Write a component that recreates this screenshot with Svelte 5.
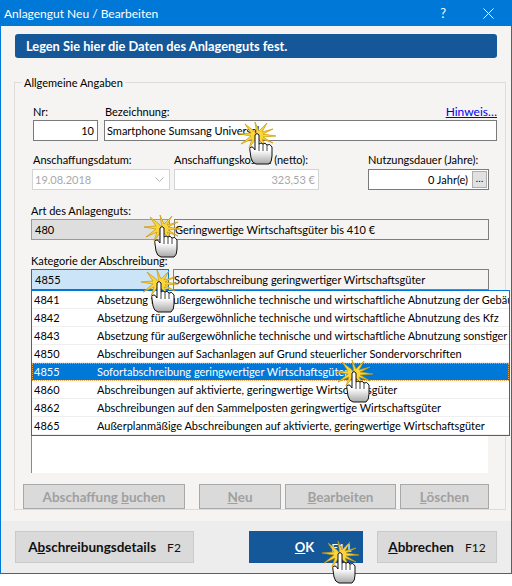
<script lang="ts">
  // Rows of the Kategorie dropdown
  const rows = [
    ["4841", "Absetzung für außergewöhnliche technische und wirtschaftliche Abnutzung der Gebäude"],
    ["4842", "Absetzung für außergewöhnliche technische und wirtschaftliche Abnutzung des Kfz"],
    ["4843", "Absetzung für außergewöhnliche technische und wirtschaftliche Abnutzung sonstiger Wirtschaftsgüter"],
    ["4850", "Abschreibungen auf Sachanlagen auf Grund steuerlicher Sondervorschriften"],
    ["4855", "Sofortabschreibung geringwertiger Wirtschaftsgüter"],
    ["4860", "Abschreibungen auf aktivierte, geringwertige Wirtschaftsgüter"],
    ["4862", "Abschreibungen auf den Sammelposten geringwertige Wirtschaftsgüter"],
    ["4865", "Außerplanmäßige Abschreibungen auf aktivierte, geringwertige Wirtschaftsgüter"],
  ];

  // Click markers laid over the dialog (tutorial annotations)
  const clicks = [
    [239, 122], [144, 215], [141, 270], [336, 360], [322, 541],
  ];
</script>

<div class="window">
  <header class="titlebar">
    <span class="title">Anlagengut Neu / Bearbeiten</span>
    <span class="help">?</span>
    <svg class="close" width="11" height="11" viewBox="0 0 11 11"><path d="M0.5 0.5 L10.5 10.5 M10.5 0.5 L0.5 10.5" stroke="#fff" stroke-width="1" fill="none" /></svg>
  </header>

  <div class="body">
    <div class="banner">Legen Sie hier die Daten des Anlagenguts fest.</div>

    <fieldset class="group">
      <legend>Allgemeine Angaben</legend>

      <div class="row row-top">
        <div class="col col-nr">
          <span class="lbl">Nr:</span>
          <div class="input right">10</div>
        </div>
        <div class="col col-name">
          <div class="lbl-line">
            <span class="lbl">Bezeichnung:</span>
            <span class="link">Hinweis…</span>
          </div>
          <div class="input">Smartphone Sumsang Universal</div>
        </div>
      </div>

      <div class="row row-second">
        <div class="col col-date">
          <span class="lbl">Anschaffungsdatum:</span>
          <div class="input disabled date">
            <span>19.08.2018</span>
            <svg width="9" height="6" viewBox="0 0 9 6"><path d="M0.5 0.5 L4.5 4.5 L8.5 0.5" stroke="#b5b5b5" fill="none" /></svg>
          </div>
        </div>
        <div class="col col-cost">
          <span class="lbl">Anschaffungskosten (netto):</span>
          <div class="input disabled right">323,53 €</div>
        </div>
        <div class="col col-dur">
          <span class="lbl">Nutzungsdauer (Jahre):</span>
          <div class="input dur">
            <span class="dur-val">0 Jahr(e)</span>
            <span class="dots">…</span>
          </div>
        </div>
      </div>

      <div class="block art">
        <span class="lbl">Art des Anlagenguts:</span>
        <div class="pair">
          <div class="field code grey">480</div>
          <div class="field text">Geringwertige Wirtschaftsgüter bis 410 €</div>
        </div>
      </div>

      <div class="block cat">
        <span class="lbl">Kategorie der Abschreibung:</span>
        <div class="pair">
          <div class="field code active">4855</div>
          <div class="field text">Sofortabschreibung geringwertiger Wirtschaftsgüter</div>
        </div>
        <div class="blank"></div>
        <ul class="dropdown">
          {#each rows as [nr, name]}
            <li class:selected={nr === "4855"}>
              <span class="nr">{nr}</span>
              <span class="name">{name}</span>
            </li>
          {/each}
        </ul>
      </div>

      <div class="actions">
        <button class="act a1">Abschaffung <u>b</u>uchen</button>
        <button class="act a2"><u>N</u>eu</button>
        <button class="act a3"><u>B</u>earbeiten</button>
        <button class="act a4"><u>L</u>öschen</button>
      </div>
    </fieldset>
  </div>

  <footer class="footer">
    <button class="foot details">A<u>b</u>schreibungsdetails<span class="key">F2</span></button>
    <button class="foot ok"><span><u>O</u>K</span><span class="key">F11</span></button>
    <button class="foot cancel"><u>A</u>bbrechen<span class="key">F12</span></button>
  </footer>
</div>

{#each clicks as [x, y]}
  <svg class="marker" style="left:{x}px;top:{y}px" width="38" height="44" viewBox="0 0 38 44">
    <defs>
      <linearGradient id="palm" x1="0" y1="0" x2="0" y2="1">
        <stop offset="0.55" stop-color="#fff" />
        <stop offset="1" stop-color="#a8a8a8" />
      </linearGradient>
    </defs>
    <path d="M18 13 L16 0 L20 9 L28 1 L23 10 L34 7 L24 12 L37 14 L24 15 L34 21 L23 17 L27 25 L20 18 L18 27 L16 18 L10 26 L13 17 L2 22 L12 14 L0 12 L12 11 L6 2 L15 9 Z" fill="#fad53c" stroke="#c99700" stroke-width="0.7" />
    <path d="M16 13 Q18 10 20 13 L20 22 Q22 20 24 22 Q26 20 28 23 Q31 21 33 25 L33 34 Q33 40 30 42 L17 42 Q13 41 12 36 L11 29 Q10 26 12 25 Q14 24 16 28 Z" fill="url(#palm)" stroke="#111" stroke-width="1" />
    <path d="M20 22 L20 29 M24 22 L24 29 M28 23 L28 29" stroke="#111" stroke-width="0.8" fill="none" />
  </svg>
{/each}

<style>
  :global(body) {
    margin: 0;
    background: #fff;
    font-family: Lato, Roboto, sans-serif;
    font-size: 11px;
    color: #000;
  }

  .window {
    width: 512px;
    height: 574px;
    box-sizing: border-box;
    border: 1px solid #0078d7;
    border-top: none;
    background: #f5f4f2;
    display: flex;
    flex-direction: column;
    overflow: hidden;
  }

  .titlebar {
    height: 26px;
    flex: none;
    background: #0078d7;
    color: #fff;
    display: flex;
    align-items: center;
    padding: 0 17px 0 3px;
    font-size: 12px;
  }

  .title {
    flex: 1;
  }

  .help {
    margin-right: 37px;
    font-size: 13px;
  }

  .body {
    flex: 1;
    padding: 8px 14px 0;
    display: flex;
    flex-direction: column;
  }

  .banner {
    height: 24px;
    line-height: 24px;
    background: #14589a;
    color: #fff;
    font-size: 12.8px;
    font-weight: 700;
    border-radius: 3px;
    padding-left: 11px;
  }

  .group {
    margin: 16px 0 0 -1px;
    padding: 0 8px 0 9px;
    width: 489px;
    height: 436px;
    box-sizing: border-box;
    border: 1px solid #dcdcdc;
  }

  legend {
    margin-left: -2px;
    padding: 0 2px;
    line-height: 17px;
  }

  .row {
    display: flex;
  }

  .col {
    display: flex;
    flex-direction: column;
  }

  .lbl {
    display: block;
    height: 16px;
    line-height: 16px;
    white-space: nowrap;
  }

  .lbl-line {
    display: flex;
    justify-content: space-between;
    padding-left: 1px;
  }

  .link {
    color: #0000ee;
    text-decoration: underline;
    line-height: 16px;
    font-size: 12px;
  }

  .row-top {
    padding: 13px 0 0 9px;
    gap: 6px;
  }

  .col-nr {
    width: 65px;
  }

  .col-name {
    width: 393px;
  }

  .input {
    height: 21px;
    box-sizing: border-box;
    border: 1px solid #7a7a7a;
    background: #fff;
    line-height: 19px;
    padding: 0 3px 0 2px;
    white-space: nowrap;
    overflow: hidden;
  }

  .right {
    text-align: right;
  }

  .row-second {
    padding: 11px 0 0 8px;
    gap: 4px;
  }

  .row-second .lbl {
    margin-bottom: 2px;
    height: 15px;
  }

  .col-date .lbl {
    margin-left: 1px;
  }

  .col-date {
    width: 138px;
  }

  .col-cost {
    width: 145px;
  }

  .col-dur {
    width: 121px;
    margin-left: 45px;
  }

  .disabled {
    border-color: #d4d4d4;
    color: #a8a8a8;
  }

  .date {
    display: flex;
    justify-content: space-between;
    align-items: center;
    padding-right: 5px;
  }

  .dur {
    display: flex;
    justify-content: flex-end;
    padding-right: 0;
  }

  .dur-val {
    margin-right: 3px;
  }

  .dots {
    width: 15px;
    height: 17px;
    margin: 1px;
    background: #e1e1e1;
    border: 1px solid #adadad;
    box-sizing: border-box;
    text-align: center;
    line-height: 12px;
    font-size: 10px;
  }

  .block {
    padding-left: 7px;
  }

  .art {
    padding-top: 13px;
  }

  .cat {
    padding-top: 13px;
    position: relative;
  }

  .pair {
    display: flex;
    gap: 4px;
    width: 458px;
  }

  .field {
    height: 21px;
    box-sizing: border-box;
    border: 1px solid #7f7f7f;
    line-height: 19px;
    white-space: nowrap;
  }

  .code {
    width: 139px;
    flex: none;
    padding-left: 2px;
  }

  .grey {
    background: #dedede;
    border-color: #9a9a9a;
    padding-left: 3px;
  }

  .active {
    background: #cce4f7;
    border-color: #0078d7;
    width: 138px;
    padding-left: 3px;
  }

  .text {
    flex: 1;
    min-width: 0;
    padding-left: 0;
    background: #f5f4f2;
  }

  .blank {
    height: 183px;
    width: 457px;
    background: #fff;
    border-left: 1px solid #8a8a8a;
    box-sizing: border-box;
  }

  .dropdown {
    position: absolute;
    left: 7px;
    top: 50px;
    width: 479px;
    height: 146px;
    box-sizing: border-box;
    margin: 0;
    padding: 0;
    list-style: none;
    background: #fff;
    border: 1px solid #0078d7;
    overflow: hidden;
  }

  .dropdown li {
    height: 18px;
    line-height: 17px;
    box-sizing: border-box;
    display: flex;
    white-space: nowrap;
    border-bottom: 1px solid #efefef;
    padding-left: 2px;
  }

  .dropdown .nr {
    width: 63px;
    flex: none;
  }

  .dropdown .selected {
    background: #0078d7;
    color: #fff;
    outline: 1px dotted #e8a04a;
    outline-offset: -1px;
  }

  .actions {
    display: flex;
    padding: 11px 0 0 0;
    margin-left: -1px;
  }

  .act,
  .foot {
    font-family: inherit;
    font-size: 13.5px;
    box-sizing: border-box;
    padding: 0;
    border-radius: 0;
  }

  .act {
    height: 25px;
    background: #dadada;
    border: 1px solid #a8a8a8;
    color: #a0a0a0;
    font-weight: 700;
  }

  .a1 {
    width: 162px;
    margin-right: 14px;
  }

  .a2 {
    width: 82px;
    margin-right: 4px;
  }

  .a3 {
    width: 111px;
    margin-right: 4px;
  }

  .a4 {
    width: 89px;
  }

  .footer {
    height: 52px;
    flex: none;
    background: #ededed;
    display: flex;
    padding: 10px 14px 0;
    box-sizing: border-box;
  }

  .foot {
    height: 32px;
    background: #dadada;
    border: 1px solid #cacaca;
    color: #111;
    font-weight: 700;
  }

  .key {
    font-weight: 400;
    font-size: 12px;
    margin-left: 11px;
  }

  .details {
    width: 179px;
    margin-right: 55px;
  }

  .ok {
    width: 114px;
    margin-right: 14px;
    background: #14589a;
    border-color: #14589a;
    color: #fff;
    font-size: 13px;
    font-weight: 700;
    display: flex;
    align-items: center;
    justify-content: flex-end;
    padding-right: 10px;
  }

  .ok .key {
    margin-left: 17px;
  }

  .cancel {
    width: 120px;
  }

  .marker {
    position: absolute;
    pointer-events: none;
  }
</style>
